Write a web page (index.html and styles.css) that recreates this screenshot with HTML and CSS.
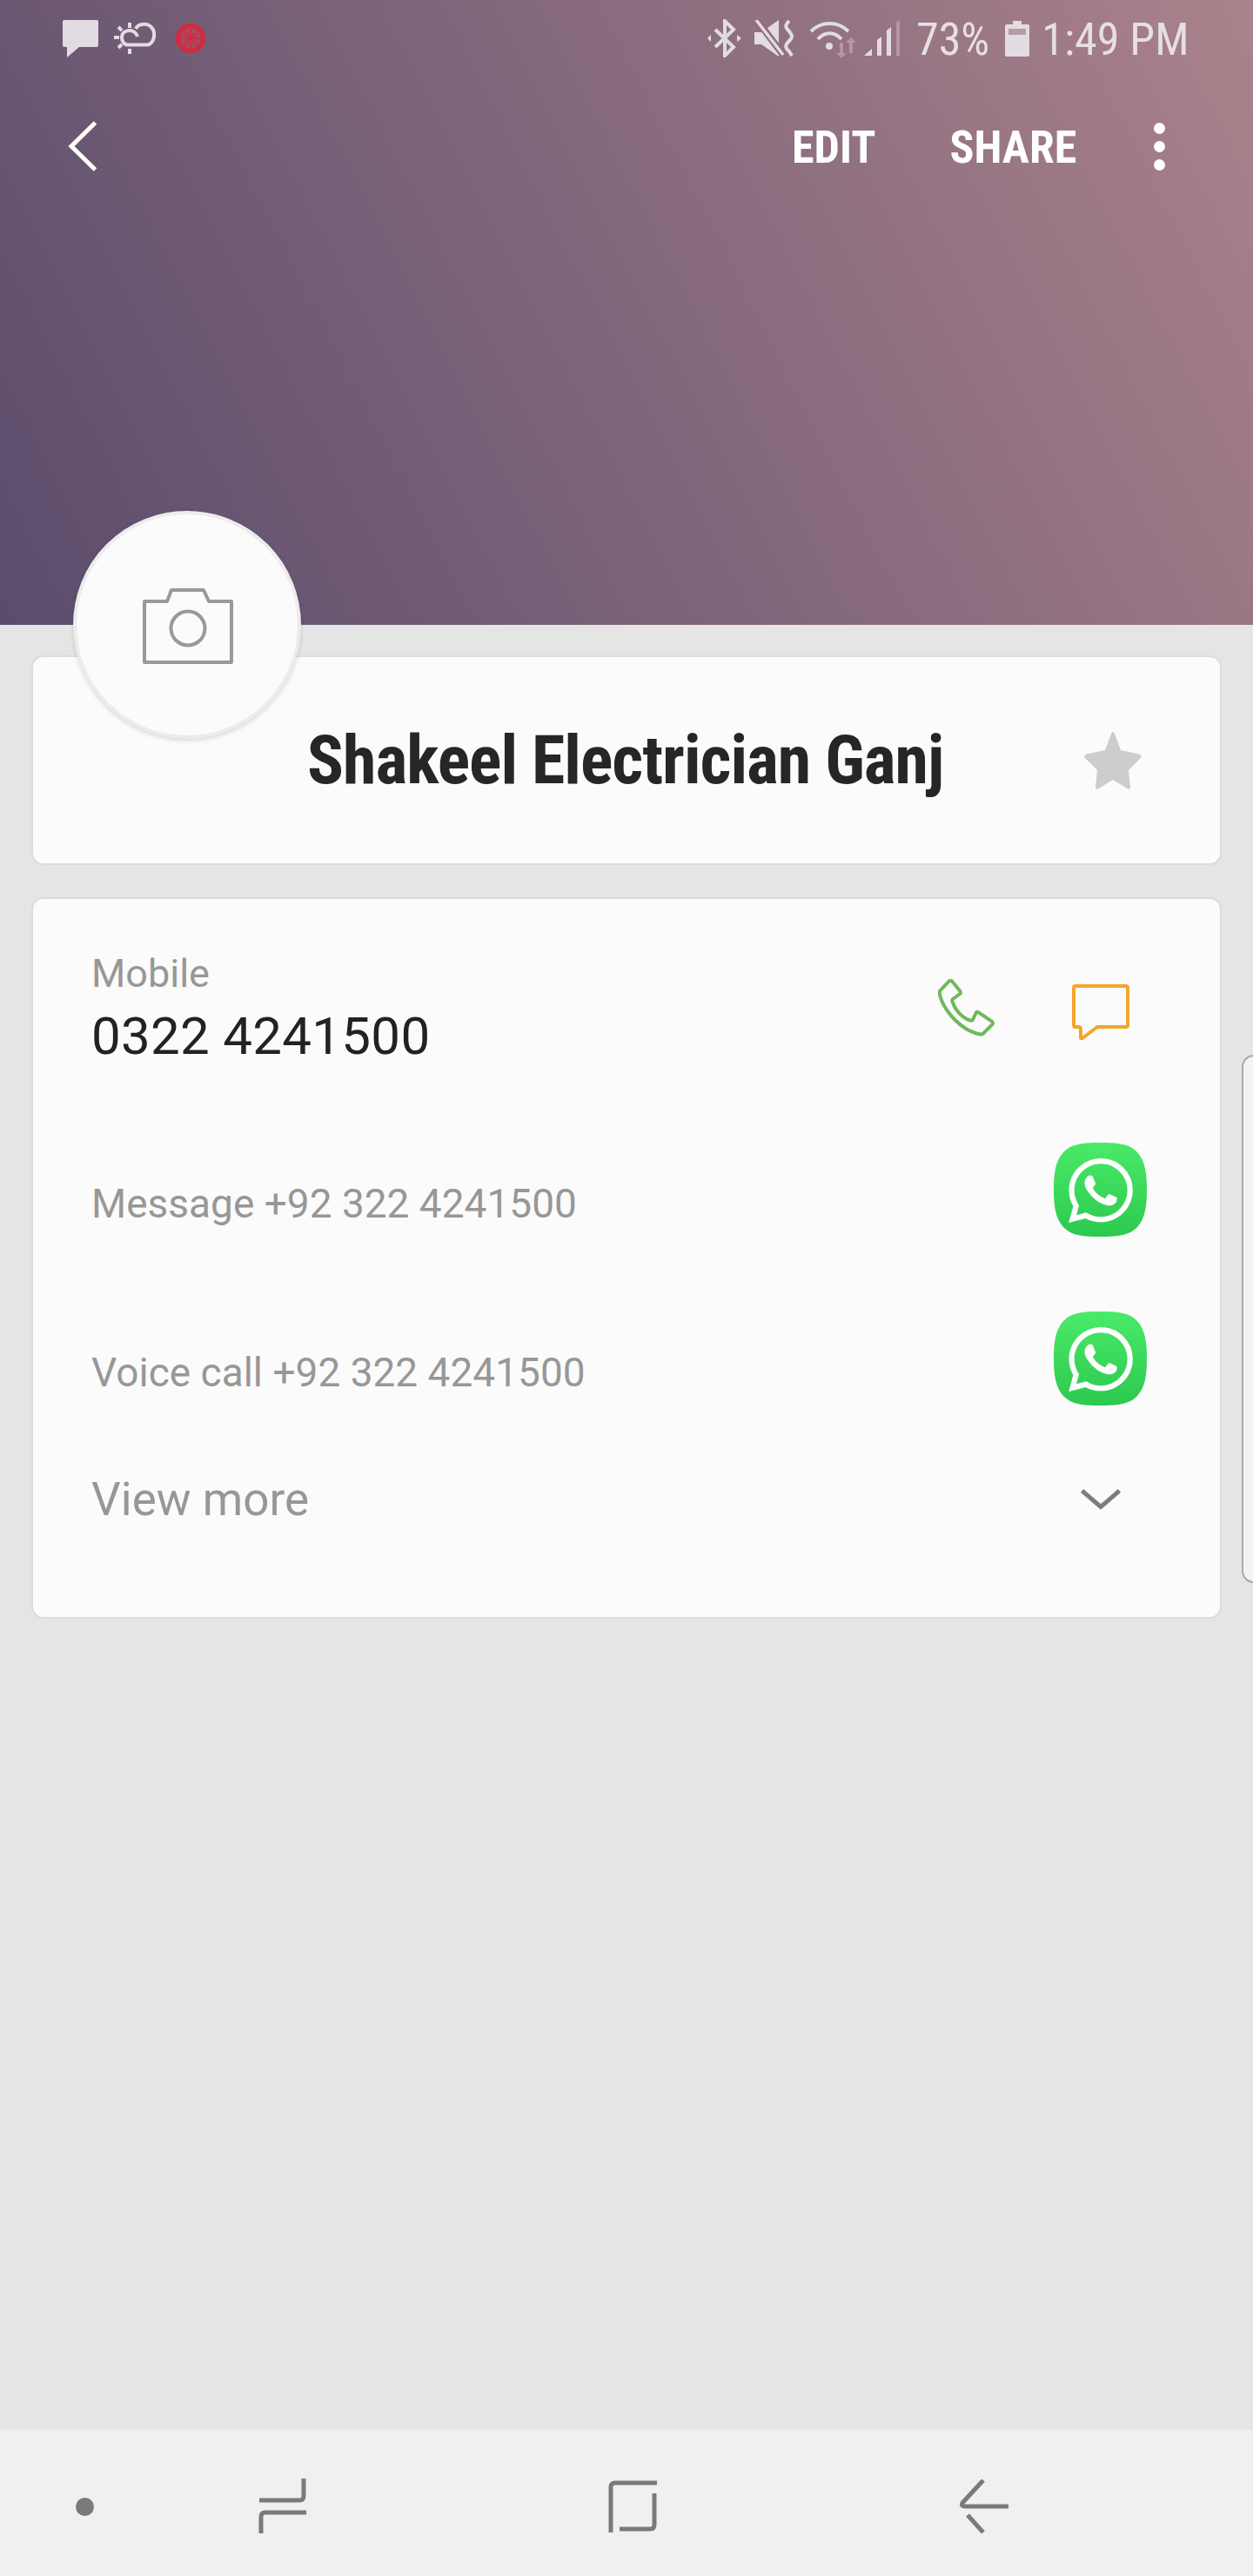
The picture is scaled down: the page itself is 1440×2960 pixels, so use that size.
FILE: index.html
```html
<!DOCTYPE html>
<html lang="en">
<head>
<meta charset="utf-8">
<title>Contact</title>
<link rel="stylesheet" href="styles.css">
</head>
<body>
<div class="page">
  <header class="hero">
    <div class="status">
      <svg class="st st-msg" width="41" height="43" viewBox="0 0 41 43"><path class="fill" d="M2 0h37a2 2 0 0 1 2 2v27a2 2 0 0 1-2 2H19L5 43V31H2a2 2 0 0 1-2-2V2a2 2 0 0 1 2-2z"/></svg>
      <svg class="st st-weather" width="48" height="36" viewBox="0 0 48 36"><path class="line" d="M25 7C27 3 31 1.800 35 1.800 42 1.800 46.500 8 46.200 14 46 21 42 25.500 38 25.500H16C12 25.500 9 22 9 17 9 12 13 9 18 9 22 9 26 12 27 16"/><path class="line" d="M18 0v6M18 30v6M0 17h6M5 5l4 4M5 29l4-4"/></svg>
      <svg class="st st-wheel" width="34" height="34" viewBox="0 0 34 34"><circle class="wheel" cx="17" cy="17" r="14.500"/><path class="spoke" d="M17 3v28M3 17h28M7 7l20 20M27 7 7 27"/></svg>
      <svg class="st st-bt" width="39" height="44" viewBox="0 0 39 44"><path class="line" d="M9 12 30 32 20 42V2L30 12 9 32"/><path class="fill" d="M0 22l4-4v8zM39 22l-5-4v8z"/></svg>
      <svg class="st st-mute" width="45" height="42" viewBox="0 0 45 42"><path class="fill" d="M0 14h8L28 0v42L8 28H0z"/><path class="slash" d="M2-1 33 40"/><path class="line thin" d="M2 0 33 40"/><path class="line" d="M40 1C35 6 35 8 40 13 44 18 44 20 40 24 35 29 35 32 40 36L43 41"/></svg>
      <svg class="st st-wifi" width="56" height="42" viewBox="0 0 56 42"><path class="line" d="M2 12C14 0 33 0 45 12M10 21C18 12 29 12 37 21"/><circle class="fill" cx="23" cy="29" r="4"/><path class="dim" d="M35 26v12h-4l6 6 6-6h-4V26zM50 38V26h4l-6-6-6 6h4v12" transform="translate(0 -1)"/></svg>
      <svg class="st st-signal" width="41" height="42" viewBox="0 0 41 42"><path class="fill" d="M0 41 9 33v8zM15 41V23l5-4v22zM26 41V12l5-4v33z"/><path class="dim" d="M37 41V3l4-3v41z"/></svg>
      <span class="st-text st-pct">73%</span>
      <svg class="st st-batt" width="28" height="41" viewBox="0 0 28 41"><path class="fill" d="M9 0h10v4h7a2 2 0 0 1 2 2v33a2 2 0 0 1-2 2H2a2 2 0 0 1-2-2V6a2 2 0 0 1 2-2h7z"/><rect class="dim2" x="4" y="9" width="20" height="7"/></svg>
      <span class="st-text st-time">1:49 PM</span>
    </div>
    <div class="toolbar">
      <svg class="back" width="34" height="58" viewBox="0 0 34 58"><path d="M31.500 2 4 29l27.500 27"/></svg>
      <span class="action action-edit">EDIT</span>
      <span class="action action-share">SHARE</span>
      <span class="more"><i></i><i></i><i></i></span>
    </div>
  </header>

  <main class="content">
    <div class="avatar">
      <svg width="104" height="88" viewBox="0 0 104 88"><path class="cam" d="M2 16h26l5-13h37l6 13h26v70H2z"/><circle class="cam" cx="52" cy="47" r="19.500"/></svg>
    </div>
    <section class="card name-card">
      <h1 class="name">Shakeel Electrician Ganj</h1>
      <svg class="star" width="66" height="66" viewBox="0 0 66 66"><path d="M33 0c1 0 1.600.8 2 2l7 19 21 4.500c2.500.6 3.500 2.500 2 4.500L51 44l2 19c.2 2.500-1.500 3.500-3.500 2L33 55 16.500 65c-2 1.500-3.700.5-3.500-2l2-19L1 30c-1.500-2-.5-3.900 2-4.500L24 21l7-19c.4-1.200 1-2 2-2z"/></svg>
    </section>
    <section class="card info-card">
      <div class="row row-mobile">
        <div class="mobile-text">
          <div class="label">Mobile</div>
          <div class="number">0322 4241500</div>
        </div>
        <svg class="phone" width="66" height="66" viewBox="0 0 66 66"><path d="M13 2.200c1-1 2.600-.8 3.300.5L25.500 14c.6 1.300.5 2.500-.5 3.200L17 23c-1 .8-1 1.500-.6 2.800C19 33 23 39 29 43.500c3 2 6 3.800 9 4.200 1 .2 1.700-.3 2-1l3.800-8c.5-1 1.600-1.200 2.500-.5L61.800 48.500c1.200 1 1.400 2.500.6 3.600L52 62.500c-1 1-2 1.300-3.500 1-7-1.500-12.500-3.700-18-7.500C15 45.500 3 28 1.700 15.500c-.1-1 .2-1.700.8-2.300z"/></svg>
        <svg class="bubble" width="66" height="64" viewBox="0 0 66 64"><path d="M4 2h58a2 2 0 0 1 2 2v43a2 2 0 0 1-2 2H29L12 62c-1 .8-2 .5-2-1V52c0-2-1-3-3-3H4a2 2 0 0 1-2-2V4a2 2 0 0 1 2-2z"/></svg>
      </div>
      <div class="row row-wa row-wa1">
        <div class="wa-text">Message +92 322 4241500</div>
        <svg class="wa" width="107" height="108" viewBox="0 0 107 108"><defs><linearGradient id="wa-g" x1="0" y1="0" x2="0" y2="1"><stop offset="0" stop-color="#4aea69"/><stop offset="1" stop-color="#2cc94e"/></linearGradient></defs><path fill="url(#wa-g)" d="M53.500 0C72 0 87 1 96 11c9 10 11 24 11 43s-2 33-11 43c-9 10-24 11-42.500 11S20 107 11 97C2 87 0 73 0 54s2-33 11-43C20 1 35 0 53.500 0z"/><svg x="17" y="18" width="74" height="74" viewBox="0 0 24 24"><path fill="#fff" d="M17.472 14.382c-.297-.149-1.758-.867-2.03-.967-.273-.099-.471-.148-.67.15-.197.297-.767.966-.94 1.164-.173.199-.347.223-.644.075-.297-.15-1.255-.463-2.39-1.475-.883-.788-1.48-1.761-1.653-2.059-.173-.297-.018-.458.13-.606.134-.133.298-.347.446-.52.149-.174.198-.298.298-.497.099-.198.05-.371-.025-.52-.075-.149-.669-1.612-.916-2.207-.242-.579-.487-.5-.669-.51-.173-.008-.371-.01-.57-.01-.198 0-.52.074-.792.372-.272.297-1.04 1.016-1.04 2.479 0 1.462 1.065 2.875 1.213 3.074.149.198 2.096 3.2 5.077 4.487.709.306 1.262.489 1.694.625.712.227 1.36.195 1.871.118.571-.085 1.758-.719 2.006-1.413.248-.694.248-1.289.173-1.413-.074-.124-.272-.198-.57-.347m-5.421 7.403h-.004a9.87 9.87 0 01-5.031-1.378l-.361-.214-3.741.982.998-3.648-.235-.374a9.86 9.86 0 01-1.51-5.26c.001-5.45 4.436-9.884 9.888-9.884 2.64 0 5.122 1.03 6.988 2.898a9.825 9.825 0 012.893 6.994c-.003 5.45-4.437 9.884-9.885 9.884m8.413-18.297A11.815 11.815 0 0012.05 0C5.495 0 .16 5.335.157 11.892c0 2.096.547 4.142 1.588 5.945L.057 24l6.305-1.654a11.882 11.882 0 005.683 1.448h.005c6.554 0 11.89-5.335 11.893-11.893a11.821 11.821 0 00-3.48-8.413z"/></svg></svg>
      </div>
      <div class="row row-wa row-wa2">
        <div class="wa-text">Voice call +92 322 4241500</div>
        <svg class="wa" width="107" height="108" viewBox="0 0 107 108"><path fill="url(#wa-g)" d="M53.500 0C72 0 87 1 96 11c9 10 11 24 11 43s-2 33-11 43c-9 10-24 11-42.500 11S20 107 11 97C2 87 0 73 0 54s2-33 11-43C20 1 35 0 53.500 0z"/><svg x="17" y="18" width="74" height="74" viewBox="0 0 24 24"><path fill="#fff" d="M17.472 14.382c-.297-.149-1.758-.867-2.03-.967-.273-.099-.471-.148-.67.15-.197.297-.767.966-.94 1.164-.173.199-.347.223-.644.075-.297-.15-1.255-.463-2.39-1.475-.883-.788-1.48-1.761-1.653-2.059-.173-.297-.018-.458.13-.606.134-.133.298-.347.446-.52.149-.174.198-.298.298-.497.099-.198.05-.371-.025-.52-.075-.149-.669-1.612-.916-2.207-.242-.579-.487-.5-.669-.51-.173-.008-.371-.01-.57-.01-.198 0-.52.074-.792.372-.272.297-1.04 1.016-1.04 2.479 0 1.462 1.065 2.875 1.213 3.074.149.198 2.096 3.2 5.077 4.487.709.306 1.262.489 1.694.625.712.227 1.36.195 1.871.118.571-.085 1.758-.719 2.006-1.413.248-.694.248-1.289.173-1.413-.074-.124-.272-.198-.57-.347m-5.421 7.403h-.004a9.87 9.87 0 01-5.031-1.378l-.361-.214-3.741.982.998-3.648-.235-.374a9.86 9.86 0 01-1.51-5.26c.001-5.45 4.436-9.884 9.888-9.884 2.64 0 5.122 1.03 6.988 2.898a9.825 9.825 0 012.893 6.994c-.003 5.45-4.437 9.884-9.885 9.884m8.413-18.297A11.815 11.815 0 0012.05 0C5.495 0 .16 5.335.157 11.892c0 2.096.547 4.142 1.588 5.945L.057 24l6.305-1.654a11.882 11.882 0 005.683 1.448h.005c6.554 0 11.89-5.335 11.893-11.893a11.821 11.821 0 00-3.48-8.413z"/></svg></svg>
      </div>
      <div class="row row-more">
        <div class="more-text">View more</div>
        <svg class="chev" width="46" height="25" viewBox="0 0 46 25"><path d="M1.500 2 23 20.500 44.500 2"/></svg>
      </div>
    </section>
  </main>

  <div class="edge-handle"></div>

  <nav class="navbar">
    <span class="nav-dot"></span>
    <svg class="nav-icon nav-recent" width="56" height="64" viewBox="0 0 56 64"><path d="M52 0V20q0 5-5 5H1M55 39H8q-5 0-5 5V63"/></svg>
    <svg class="nav-icon nav-home" width="56" height="60" viewBox="0 0 56 60"><path d="M56 3H8Q3 3 3 8V60M53 15V51q0 5-5 5H13"/></svg>
    <svg class="nav-icon nav-back" width="56" height="62" viewBox="0 0 56 62"><path d="M27 1 3 27q-2 4 3 4H56M9 41 27 61"/></svg>
  </nav>
</div>
</body>
</html>
```
FILE: styles.css
```css
* { box-sizing: border-box; }
html, body { margin: 0; padding: 0; }
body { font-family: Roboto, "Liberation Sans", sans-serif; background: #e5e5e5; }
.page { position: relative; width: 1440px; height: 2960px; display: flex; flex-direction: column; overflow: hidden; }

/* Header */
.hero { height: 718px; flex: none; background: linear-gradient(63deg, #5a4c6c 0%, #aa828b 100%); }
.status { height: 88px; display: flex; align-items: center; padding-left: 72px; }
.st { flex: none; }
.fill { fill: #e2dce2; }
.line { fill: none; stroke: #e2dce2; stroke-width: 4; }
.line.thin { stroke-width: 3.5; }
.slash { fill: none; stroke: #8d6d80; stroke-width: 8; }
.dim { fill: #b596a6; }
.dim2 { fill: #b79aa8; }
.wheel { fill: #a9485f; stroke: #d32a3e; stroke-width: 5; }
.spoke { fill: none; stroke: #d32a3e; stroke-width: 1.5; }
.st-weather { margin-left: 18px; }
.st-wheel { margin-left: 23px; }
.st-bt { margin-left: 577px; }
.st-mute { margin-left: 15px; }
.st-wifi { margin-left: 18px; margin-top: 2px; }
.st-signal { margin-left: 7px; }
.st-text { color: #e6dfe4; font-family: "Roboto Condensed", "Liberation Sans Narrow", Roboto, sans-serif; font-stretch: condensed; font-weight: 400; font-size: 52px; line-height: 60px; white-space: nowrap; margin-top: 3px; }
.st-pct { margin-left: 19px; }
.st-batt { margin-left: 18px; }
.st-time { margin-left: 14px; }

.toolbar { height: 160px; display: flex; align-items: center; padding-left: 78px; }
.back { flex: none; }
.back path { fill: none; stroke: #fff; stroke-width: 5; }
.action { color: #fff; font-family: "Roboto Condensed", "Liberation Sans Narrow", Roboto, sans-serif; font-stretch: condensed; font-weight: 700; font-size: 52px; line-height: 60px; margin-top: 3px; }
.action-edit { margin-left: 798px; }
.action-share { margin-left: 85px; }
.more { display: flex; flex-direction: column; gap: 8px; margin-left: 89px; }
.more i { display: block; width: 13px; height: 13px; border-radius: 50%; background: #fff; }

/* Content */
.content { flex: 1; position: relative; padding: 35px 36px 0; }
.avatar { position: absolute; left: 84px; top: -131px; width: 262px; height: 262px; border-radius: 50%; background: #fbfbfb; border: 4px solid #ececec; box-shadow: 0 2px 5px rgba(0,0,0,.14); display: flex; align-items: center; justify-content: center; z-index: 2; padding: 2px 0 0 2px; }
.cam { fill: none; stroke: #999; stroke-width: 4; stroke-linejoin: round; }
.card { background: #fbfbfb; border: 2px solid #dcdcdc; border-radius: 14px; }
.name-card { height: 241px; display: flex; align-items: center; padding-left: 315px; padding-right: 90px; justify-content: space-between; }
.name { margin: 0; color: #262626; font-family: "Roboto Condensed", "Liberation Sans Narrow", Roboto, sans-serif; font-stretch: condensed; font-weight: 700; font-size: 78px; letter-spacing: -1px; line-height: 90px; white-space: nowrap; }
.star { fill: #cdcdcd; flex: none; }
.info-card { margin-top: 37px; height: 829px; padding: 0 84px 0 67px; }

.row { display: flex; }
.row-mobile { height: 166px; align-items: flex-start; padding-top: 56px; }
.mobile-text { flex: 1; }
.label { color: #979797; font-size: 45px; line-height: 60px; }
.number { color: #222; font-size: 60px; letter-spacing: .3px; line-height: 76px; margin-top: 4px; }
.phone { flex: none; margin-top: 36px; fill: none; stroke: #71b95b; stroke-width: 4; }
.bubble { flex: none; margin-left: 88px; margin-right: 20px; margin-top: 42px; fill: none; stroke: #f2a62a; stroke-width: 4; }
.row-wa { height: 108px; align-items: flex-end; justify-content: space-between; }
.row-wa1 { margin-top: 114px; }
.row-wa2 { margin-top: 86px; }
.wa-text { color: #979797; font-size: 46px; line-height: 56px; margin-bottom: 10px; }
.wa { flex: none; }
.row-more { align-items: center; justify-content: space-between; margin-top: 73px; height: 70px; }
.more-text { color: #979797; font-size: 53px; line-height: 70px; }
.chev { flex: none; margin-right: 30px; fill: none; stroke: #7d7d7d; stroke-width: 5; }

.edge-handle { position: absolute; left: 1427px; top: 1212px; width: 30px; height: 607px; background: #f3f3f3; border: 2px solid #aaa; border-radius: 14px; }

/* Navigation bar */
.navbar { height: 168px; flex: none; background: #f0f0f0; display: flex; align-items: center; padding-top: 8px; padding-left: 87px; }
.nav-dot { width: 21px; height: 21px; border-radius: 50%; background: #7a7a7a; flex: none; }
.nav-icon { flex: none; fill: none; stroke: #7a7a7a; stroke-width: 5; }
.nav-recent { margin-left: 189px; }
.nav-home { margin-left: 346px; }
.nav-back { margin-left: 348px; }
```
